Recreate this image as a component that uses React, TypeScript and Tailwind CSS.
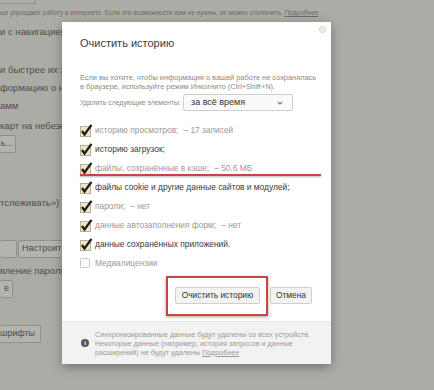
import { X } from 'lucide-react';

const font = { fontFamily: '"Liberation Sans", "Noto Sans", sans-serif' };

type Row = { label: string; extra?: string; dim?: boolean; checked?: boolean };

const rows: Row[] = [
  { label: 'историю просмотров;', extra: '–  17 записей', dim: true, checked: true },
  { label: 'историю загрузок;', checked: true },
  { label: 'файлы, сохранённые в кэше;', extra: '–  50,6 МБ', dim: true, checked: true },
  { label: 'файлы cookie и другие данные сайтов и модулей;', checked: true },
  { label: 'пароли;', extra: '–  нет', dim: true, checked: true },
  { label: 'данные автозаполнения форм;', extra: '–  нет', dim: true, checked: true },
  { label: 'данные сохранённых приложений.', checked: true },
];

// галочка как в старом хроме: бежевый квадрат и жирная черная птичка
function Check({ checked }: { checked?: boolean }) {
  return (
    <svg width="13" height="13" viewBox="0 0 13 13" className="shrink-0">
      <rect x="0.5" y="2.5" width="10" height="10" fill={checked ? '#efe6c8' : '#f4f4f4'} stroke={checked ? '#b9b08f' : '#c8c8c8'} />
      {checked && <path d="M2 7 L4.5 10.5 L11.5 0.8" fill="none" stroke="#1d1d1b" strokeWidth="2.3" />}
    </svg>
  );
}

function BgButton({ children, className }: { children: React.ReactNode; className?: string }) {
  return (
    <div className={`h-[18px] border border-[#8f8f8b] bg-[#b4b4af] rounded-[2px] text-[9px] text-[#4a4a47] flex items-center px-2 ${className ?? ''}`}>
      {children}
    </div>
  );
}

export default function App() {
  return (
    <div className="relative w-[434px] h-[390px] overflow-hidden bg-[#acaca7]" style={font}>
      {/* страница настроек под затемнением */}
      <div className="flex flex-col text-[9.5px] text-[#4d4d4a] whitespace-nowrap">
        <div className="h-[4px] w-[36px] border-b border-r border-[#8f8f8b]" />
        <div className="mt-[4px] h-[10px] leading-[10px] text-[6.5px] text-[#6a6a66]">
          ые упрощают работу в интернете. Если эти возможности вам не нужны, их можно отключить.{' '}
          <span className="underline">Подробнее</span>
        </div>
        <div className="mt-[8px] leading-[12px]">и с навигацией</div>
        <div className="mt-[26px] leading-[12px]">и быстрее их загрузки</div>
        <div className="mt-[6px] leading-[12px]">формацию о небезопасных</div>
        <div className="mt-[6px] leading-[12px]">амм</div>
        <div className="mt-[8px] leading-[12px]">карт на небезопасных</div>
        <BgButton className="mt-[3px] w-[17px] -ml-[1px] px-0 justify-end pr-[2px]">ь...</BgButton>
        <div className="mt-[44px] leading-[12px]">тслеживать»)</div>
        <div className="mt-[31px] flex gap-[1px]">
          <BgButton className="w-[3px] px-0 border-l-0">{''}</BgButton>
          <BgButton className="w-[52px] justify-center">Настроить</BgButton>
        </div>
        <div className="mt-[7px] leading-[12px]">вление паролям</div>
        <BgButton className="mt-[3px] w-[13px] border-l-0 px-0 justify-end pr-[3px]">е</BgButton>
        <BgButton className="mt-[27px] w-[41px] border-l-0 px-0 justify-end pr-[5px]">шрифты</BgButton>
      </div>

      {/* диалог */}
      <div className="absolute left-[62px] top-[22px] w-[269px] bg-white shadow-[0_3px_10px_rgba(0,0,0,0.35)] flex flex-col">
        <div className="relative px-[18px] pt-[14px]">
          <div className="absolute right-[5px] top-[4px] w-[7px] h-[7px] rounded-full border border-[#cfcfcf] flex items-center justify-center">
            <X className="w-[5px] h-[5px] text-[#bdbdbd]" strokeWidth={3} />
          </div>
          <div className="text-[11px] leading-[14px] text-[#3c3c3c]">Очистить историю</div>
          <div className="mt-[23px] text-[7.4px] leading-[9px] text-[#8a8a8a] whitespace-nowrap">
            Если вы хотите, чтобы информация о вашей работе не сохранялась
            <br />в браузере, используйте режим Инкогнито (Ctrl+Shift+N).
          </div>
          <div className="mt-[3px] flex items-center whitespace-nowrap">
            <span className="text-[6.9px] leading-[9px] text-[#8a8a8a] w-[103px] shrink-0">Удалить следующие элементы:</span>
            <div className="w-[110px] h-[17px] border border-[#cfcfcf] rounded-[2px] bg-[#fafafa] flex items-center justify-between pl-[7px] pr-[9px]">
              <span className="text-[9px] text-[#333]">за всё время</span>
              <svg width="6" height="4" viewBox="0 0 6 4">
                <path d="M0.8 0.8 L3 3 L5.2 0.8" fill="none" stroke="#777" strokeWidth="1.1" />
              </svg>
            </div>
          </div>
          <div className="mt-[10px] flex flex-col whitespace-nowrap">
            {rows.map((r) => (
              <div key={r.label} className="h-[19px] flex items-center gap-[2px]">
                <Check checked={r.checked} />
                <span className={`text-[8.4px] ${r.dim ? 'text-[#9a9a9a]' : 'text-[#3a3a3a]'}`}>
                  {r.label}
                  {r.extra && <span className="ml-[5px]">{r.extra}</span>}
                </span>
              </div>
            ))}
            <div className="h-[18px] flex items-center gap-[5px]">
              <svg width="10" height="10" viewBox="0 0 10 10" className="shrink-0">
                <rect x="0.5" y="0.5" width="9" height="9" rx="1" fill="#fafafa" stroke="#c9c9c9" />
              </svg>
              <span className="text-[8.4px] text-[#9a9a9a]">Медиалицензии</span>
            </div>
          </div>
          <div className="mt-[15px] mb-[17px] flex justify-end gap-[10px] pr-[1px] whitespace-nowrap">
            <div className="h-[17px] w-[85px] border border-[#cfcfcf] rounded-[2px] bg-[#f3f3f3] flex items-center justify-center text-[8.4px] text-[#333]">
              Очистить историю
            </div>
            <div className="h-[17px] w-[42px] border border-[#cfcfcf] rounded-[2px] bg-[#f3f3f3] flex items-center justify-center text-[8.4px] text-[#333]">
              Отмена
            </div>
          </div>
          {/* пометки красным поверх скриншота */}
          <div className="absolute left-[18px] top-[152px] w-[241px] h-[2px] bg-[#c4473d] shadow-[0_1px_2px_rgba(0,0,0,0.3)]" />
          <div className="absolute left-[104px] top-[254px] w-[102px] h-[40px] border-2 border-[#c4473d] shadow-[0_1px_3px_rgba(0,0,0,0.35)]" />
        </div>
        <div className="bg-[#f2f2f2] border-t border-[#e6e6e6] h-[43px] flex items-center pl-[19px] gap-[6px] whitespace-nowrap">
          <div className="w-[8px] h-[8px] rounded-full bg-[#555] flex items-center justify-center text-white text-[6px] font-bold shrink-0" style={{ fontFamily: '"Liberation Serif", serif' }}>
            i
          </div>
          <div className="text-[7.2px] leading-[9px] text-[#9a9a9a]">
            Синхронизированные данные будут удалены со всех устройств.
            <br />Некоторые данные (например, история запросов и данные
            <br />расширений) не будут удалены <span className="underline">Подробнее</span>
          </div>
        </div>
      </div>
    </div>
  );
}
